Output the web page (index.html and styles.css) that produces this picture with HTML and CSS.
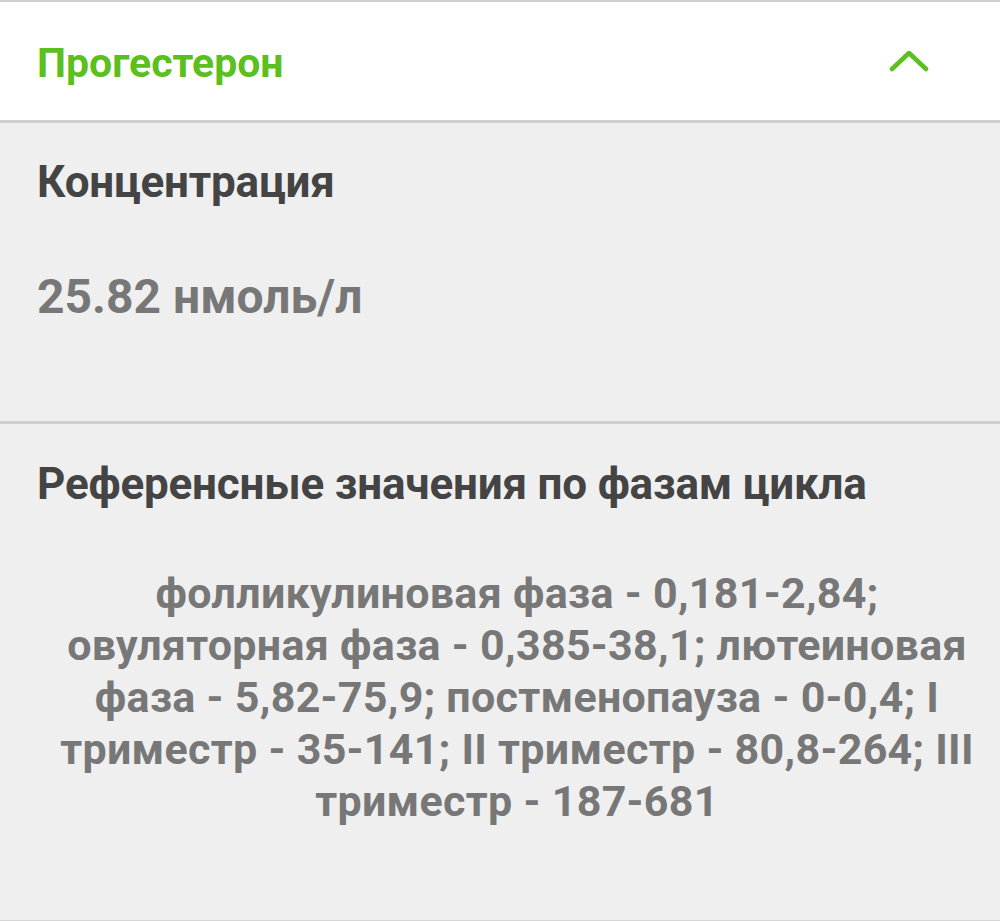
FILE: index.html
```html
<!DOCTYPE html>
<html lang="ru">
<head>
<meta charset="utf-8">
<link rel="stylesheet" href="styles.css">
</head>
<body>
<div class="card">
  <div class="card-header">
    <span class="title">Прогестерон</span>
    <svg class="chevron" width="42" height="22" viewBox="0 0 42 22"><path d="M4 19 L21 3 L38 19" fill="none" stroke="#5bbf1d" stroke-width="4.5" stroke-linecap="round" stroke-linejoin="round"/></svg>
  </div>
  <div class="section section-conc">
    <div class="heading">Концентрация</div>
    <div class="value">25.82 нмоль/л</div>
  </div>
  <div class="section section-ref">
    <div class="heading">Референсные значения по фазам цикла</div>
    <div class="ref-text">фолликулиновая фаза - 0,181-2,84;<br>овуляторная фаза - 0,385-38,1; лютеиновая<br>фаза - 5,82-75,9; постменопауза - 0-0,4; I<br>триместр - 35-141; II триместр - 80,8-264; III<br>триместр - 187-681</div>
  </div>
</div>
</body>
</html>
```

FILE: styles.css
```css
html, body {
  margin: 0;
  padding: 0;
  background: #efefef;
  font-family: Roboto, "Noto Sans", sans-serif;
}
.card {
  width: 1000px;
  height: 921px;
  box-sizing: border-box;
  border-top: 2px solid #d0d0d0;
  border-bottom: 1px solid #d6d6d6;
  background: #efefef;
  overflow: hidden;
}
.card-header {
  height: 118px;
  background: #ffffff;
  border-bottom: 3px solid #cfcfcf;
  display: flex;
  align-items: center;
  justify-content: space-between;
  padding: 0 70px 0 37px;
}
.title {
  color: #5bbf1d;
  font-size: 41px;
  font-weight: 700;
  margin-top: 4px;
}
.chevron {
  display: block;
}
.section {
  padding: 0 37px;
}
.section-conc {
  padding-top: 33px;
  padding-bottom: 96px;
  border-bottom: 3px solid #cfcfcf;
}
.section-ref {
  padding-top: 34px;
}
.heading {
  color: #444444;
  font-size: 44px;
  font-weight: 700;
  letter-spacing: -0.2px;
}
.value {
  margin-top: 60px;
  color: #777777;
  font-size: 48px;
  font-weight: 700;
}
.ref-text {
  margin: 57px -21px 0 13px;
  color: #777777;
  font-size: 43px;
  font-weight: 700;
  letter-spacing: 0.3px;
  line-height: 52px;
  text-align: center;
  white-space: nowrap;
}
```
